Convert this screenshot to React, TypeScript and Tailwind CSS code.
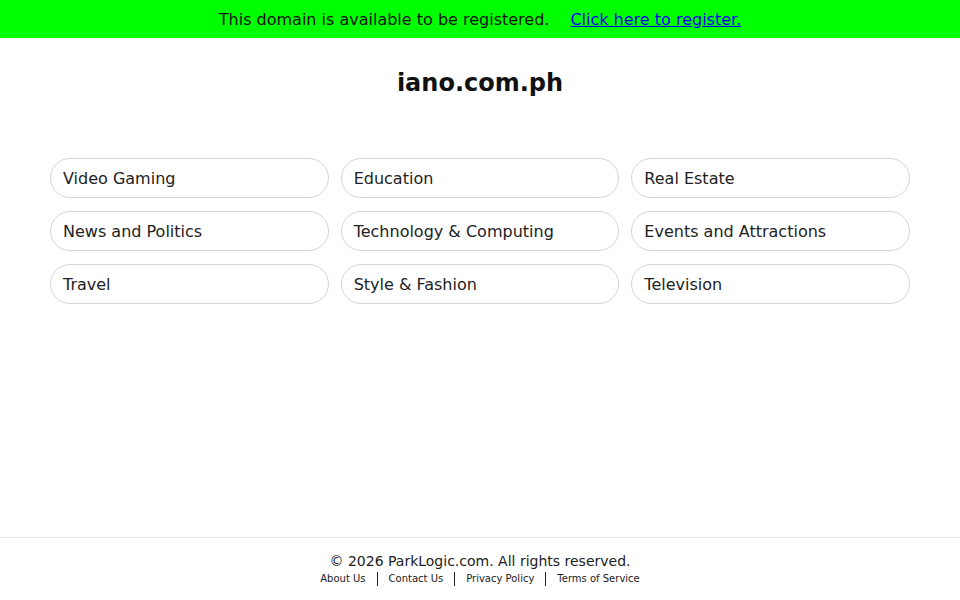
const categories = [
  'Video Gaming',
  'Education',
  'Real Estate',
  'News and Politics',
  'Technology & Computing',
  'Events and Attractions',
  'Travel',
  'Style & Fashion',
  'Television',
];

const footerLinks = ['About Us', 'Contact Us', 'Privacy Policy', 'Terms of Service'];

export default function App() {
  return (
    <div className="min-h-screen flex flex-col bg-white text-[#111] font-['DejaVu_Sans',sans-serif]">
      <div className="h-[38px] bg-[#00ff00] flex items-center justify-center pt-px text-[16px] text-[#111]">
        <span>This domain is available to be registered.</span>
        <a href="#" className="ml-[21px] text-[#0000ee] underline">
          Click here to register.
        </a>
      </div>

      <main className="flex-1">
        <h1 className="mt-[29px] text-center text-[24px] leading-[32px] font-bold text-[#111]">
          iano.com.ph
        </h1>
        <div className="mx-[50px] mt-[59px] grid grid-cols-3 gap-x-[12px] gap-y-[13px]">
          {categories.map((c) => (
            <a
              key={c}
              href="#"
              className="h-[40px] flex items-center pl-[12px] pt-[2px] rounded-full border border-[#d4d4d4] text-[16px] text-[#222]"
            >
              {c}
            </a>
          ))}
        </div>
      </main>

      <footer className="h-[63px] border-t border-[#e5e5e5] flex flex-col items-center pt-[14px]">
        <p className="text-[14px] leading-[18px] text-[#222]">© 2026 ParkLogic.com. All rights reserved.</p>
        <div className="flex items-center text-[10px] leading-[14px] text-[#222] mt-[2px]">
          {footerLinks.map((l, i) => (
            <div key={l} className="flex items-center">
              {i > 0 && <span className="mx-[11px] w-px h-[14px] bg-[#222]" />}
              <a href="#">{l}</a>
            </div>
          ))}
        </div>
      </footer>
    </div>
  );
}
